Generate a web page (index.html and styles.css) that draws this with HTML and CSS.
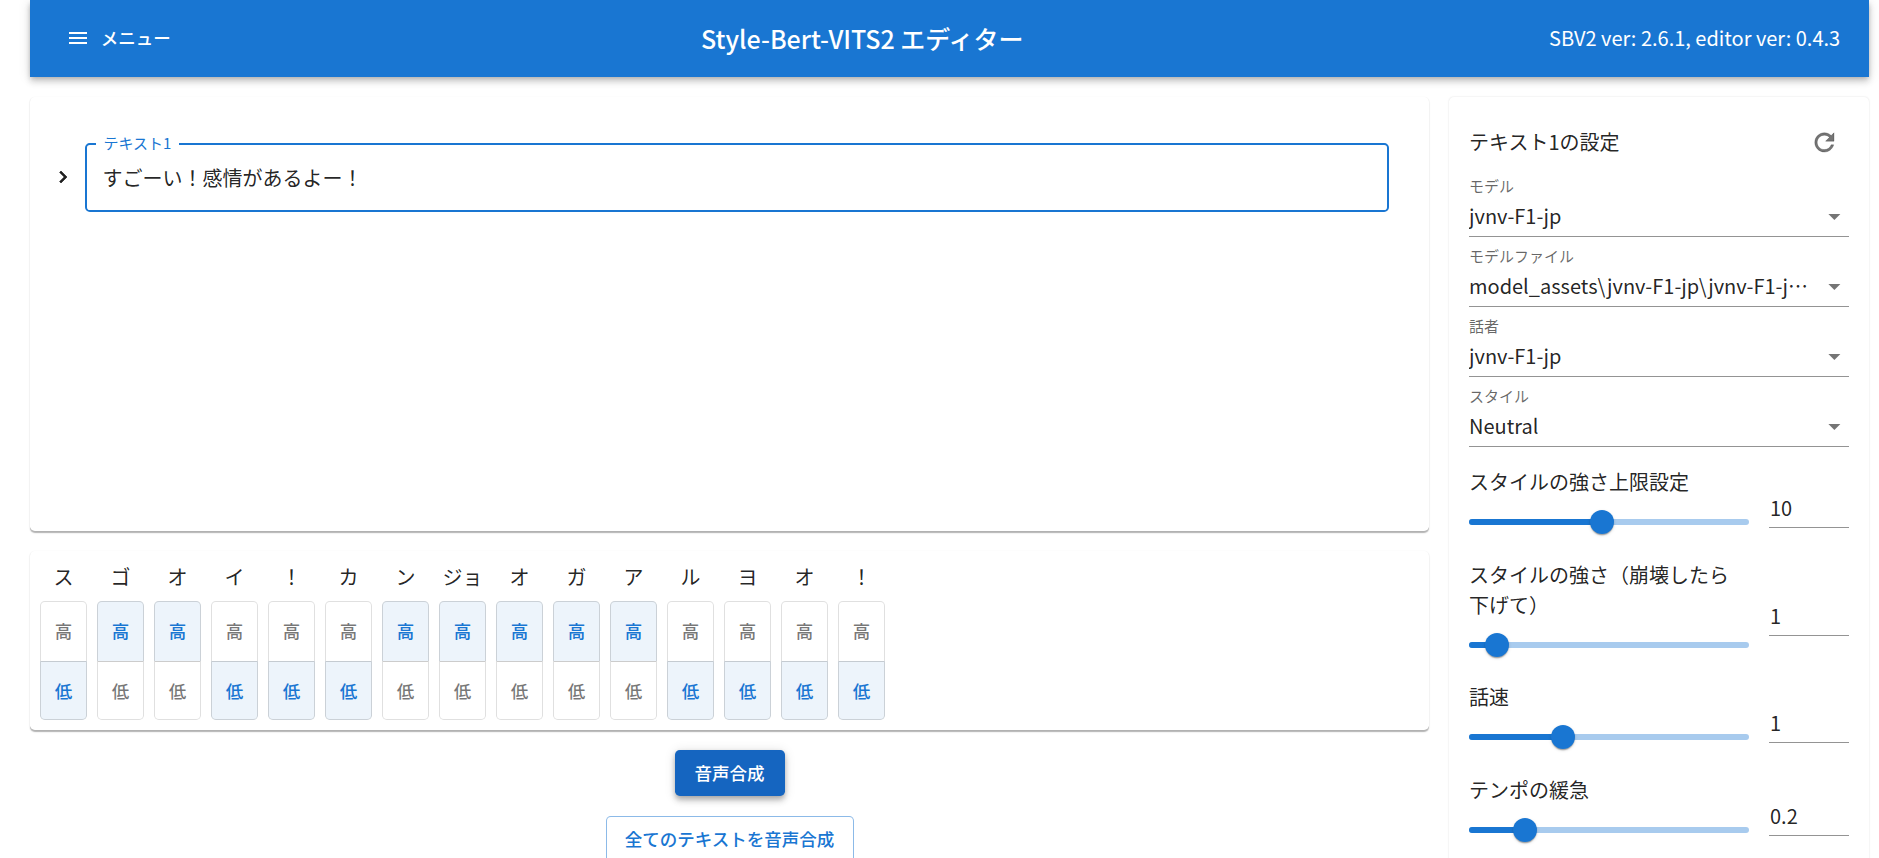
FILE: index.html
```html
<!DOCTYPE html>
<html lang="ja">
<head>
<meta charset="utf-8">
<title>Style-Bert-VITS2 エディター</title>
<link rel="stylesheet" href="styles.css">
</head>
<body>
<div class="page">
  <header class="appbar">
    <button class="menu-btn"><svg class="menu-icon" viewBox="0 0 24 24"><path d="M3 18h18v-2H3v2zm0-5h18v-2H3v2zm0-7v2h18V6H3z"/></svg><span>メニュー</span></button>
    <div class="app-title">Style-Bert-VITS2 エディター</div>
    <div class="app-version">SBV2 ver: 2.6.1, editor ver: 0.4.3</div>
  </header>
  <main class="main">
    <section class="left">
      <div class="paper editor">
        <svg class="chevron" viewBox="0 0 24 24"><path d="M8.59 16.59 13.17 12 8.59 7.41 10 6l6 6-6 6-1.41-1.41z"/></svg>
        <div class="textfield">
          <span class="textfield-label">テキスト1</span>
          <span>すごーい！感情があるよー！</span>
        </div>
      </div>
      <div class="paper accent-panel">
        <div class="mora"><div class="kana">ス</div><div class="toggle"><div class="tg">高</div><div class="tg on">低</div></div></div>
        <div class="mora"><div class="kana">ゴ</div><div class="toggle"><div class="tg on">高</div><div class="tg">低</div></div></div>
        <div class="mora"><div class="kana">オ</div><div class="toggle"><div class="tg on">高</div><div class="tg">低</div></div></div>
        <div class="mora"><div class="kana">イ</div><div class="toggle"><div class="tg">高</div><div class="tg on">低</div></div></div>
        <div class="mora"><div class="kana">！</div><div class="toggle"><div class="tg">高</div><div class="tg on">低</div></div></div>
        <div class="mora"><div class="kana">カ</div><div class="toggle"><div class="tg">高</div><div class="tg on">低</div></div></div>
        <div class="mora"><div class="kana">ン</div><div class="toggle"><div class="tg on">高</div><div class="tg">低</div></div></div>
        <div class="mora"><div class="kana">ジョ</div><div class="toggle"><div class="tg on">高</div><div class="tg">低</div></div></div>
        <div class="mora"><div class="kana">オ</div><div class="toggle"><div class="tg on">高</div><div class="tg">低</div></div></div>
        <div class="mora"><div class="kana">ガ</div><div class="toggle"><div class="tg on">高</div><div class="tg">低</div></div></div>
        <div class="mora"><div class="kana">ア</div><div class="toggle"><div class="tg on">高</div><div class="tg">低</div></div></div>
        <div class="mora"><div class="kana">ル</div><div class="toggle"><div class="tg">高</div><div class="tg on">低</div></div></div>
        <div class="mora"><div class="kana">ヨ</div><div class="toggle"><div class="tg">高</div><div class="tg on">低</div></div></div>
        <div class="mora"><div class="kana">オ</div><div class="toggle"><div class="tg">高</div><div class="tg on">低</div></div></div>
        <div class="mora"><div class="kana">！</div><div class="toggle"><div class="tg">高</div><div class="tg on">低</div></div></div>
      </div>
      <div class="actions">
        <button class="btn btn-primary">音声合成</button>
        <button class="btn btn-outline">全てのテキストを音声合成</button>
      </div>
    </section>
    <aside class="paper settings">
      <div class="settings-head">
        <span>テキスト1の設定</span>
        <svg class="reload" viewBox="0 0 24 24"><path d="M17.65 6.35C16.2 4.9 14.21 4 12 4c-4.42 0-7.99 3.58-7.99 8s3.57 8 7.99 8c3.73 0 6.84-2.55 7.73-6h-2.08c-.82 2.33-3.04 4-5.65 4-3.31 0-6-2.69-6-6s2.69-6 6-6c1.66 0 3.14.69 4.22 1.78L13 11h7V4l-2.35 2.35z"/></svg>
      </div>
      <div class="select">
        <div class="select-label">モデル</div>
        <div class="select-value"><span class="select-text">jvnv-F1-jp</span><svg class="caret" viewBox="0 0 24 24"><path d="M7 10l5 5 5-5z"/></svg></div>
      </div>
      <div class="select">
        <div class="select-label">モデルファイル</div>
        <div class="select-value"><span class="select-text">model_assets\jvnv-F1-jp\jvnv-F1-jp_e160_s14000.safetensors</span><svg class="caret" viewBox="0 0 24 24"><path d="M7 10l5 5 5-5z"/></svg></div>
      </div>
      <div class="select">
        <div class="select-label">話者</div>
        <div class="select-value"><span class="select-text">jvnv-F1-jp</span><svg class="caret" viewBox="0 0 24 24"><path d="M7 10l5 5 5-5z"/></svg></div>
      </div>
      <div class="select">
        <div class="select-label">スタイル</div>
        <div class="select-value"><span class="select-text">Neutral</span><svg class="caret" viewBox="0 0 24 24"><path d="M7 10l5 5 5-5z"/></svg></div>
      </div>
      <div class="sliders">
        <div class="slider-row">
          <div>
            <div class="slider-label">スタイルの強さ上限設定</div>
            <div class="slider"><div class="rail"><div class="fill" style="width:47.5%"></div><div class="thumb" style="left:47.5%"></div></div></div>
          </div>
          <div class="num">10</div>
        </div>
        <div class="slider-row">
          <div>
            <div class="slider-label">スタイルの強さ（崩壊したら<br>下げて）</div>
            <div class="slider"><div class="rail"><div class="fill" style="width:10%"></div><div class="thumb" style="left:10%"></div></div></div>
          </div>
          <div class="num">1</div>
        </div>
        <div class="slider-row">
          <div>
            <div class="slider-label">話速</div>
            <div class="slider"><div class="rail"><div class="fill" style="width:33.5%"></div><div class="thumb" style="left:33.5%"></div></div></div>
          </div>
          <div class="num">1</div>
        </div>
        <div class="slider-row">
          <div>
            <div class="slider-label">テンポの緩急</div>
            <div class="slider"><div class="rail"><div class="fill" style="width:20%"></div><div class="thumb" style="left:20%"></div></div></div>
          </div>
          <div class="num">0.2</div>
        </div>
      </div>
    </aside>
  </main>
</div>
</body>
</html>
```

FILE: styles.css
```css
* { box-sizing: border-box; }
html, body { margin: 0; height: 100%; overflow: hidden; background: #fff; }
body {
  font-family: "Noto Sans CJK JP", "Noto Sans", sans-serif;
  font-size: 20px;
  line-height: 30px;
  color: rgba(0, 0, 0, 0.87);
}
button { font-family: inherit; cursor: pointer; }
.page { margin: 0 10px 0 30px; }

.appbar {
  height: 77px;
  background: #1976d2;
  color: #fff;
  padding: 0 28.8px;
  display: flex;
  align-items: center;
  justify-content: space-between;
  box-shadow: 0 2.4px 4.8px -1.2px rgba(0,0,0,.2), 0 4.8px 6px 0 rgba(0,0,0,.14), 0 1.2px 12px 0 rgba(0,0,0,.12);
  position: relative;
  z-index: 2;
}
.menu-btn {
  display: flex;
  align-items: center;
  gap: 11px;
  background: none;
  border: 0;
  color: #fff;
  font-size: 17.5px;
  font-weight: 500;
  line-height: 29.4px;
  padding: 7.2px 4.8px 7.2px 7px;
  margin-top: -2px;
}
.menu-icon { width: 24px; height: 24px; fill: #fff; display: block; }
.app-title { font-size: 25px; line-height: 36px; font-weight: 500; margin-top: -2px; }
.app-version { margin-top: -2px; }

.main { display: flex; gap: 20px; padding-top: 20px; align-items: flex-start; }
.left { flex: 1; min-width: 0; display: flex; flex-direction: column; gap: 20px; }
.paper {
  background: #fff;
  border-radius: 4.8px;
  box-shadow: 0 1.2px 1.2px 0 rgba(0,0,0,.3), 0 0 1.5px 0 rgba(0,0,0,.03);
}

.editor {
  height: 434px;
  padding: 46px 40px 0 20px;
  display: flex;
  align-items: flex-start;
}
.chevron { width: 24px; height: 24px; fill: rgba(0,0,0,.87); stroke: rgba(0,0,0,.87); stroke-width: .6px; flex: none; margin: 22px 10px 0 1px; display: block; }
.textfield {
  position: relative;
  flex: 1;
  height: 69px;
  border: 2.4px solid #1976d2;
  border-radius: 4.8px;
  padding: 0 15.5px;
  display: flex;
  align-items: center;
}
.textfield-label {
  position: absolute;
  left: 8.5px;
  top: -13px;
  padding: 0 8px;
  background: #fff;
  color: #1976d2;
  font-size: 15px;
  line-height: 22px;
}

.accent-panel { height: 179px; padding: 11px 10px 10px; display: flex; gap: 10px; }
.mora { width: 47px; display: flex; flex-direction: column; gap: 9px; }
.kana { text-align: center; white-space: nowrap; }
.toggle { display: flex; flex-direction: column; height: 119px; }
.tg {
  display: flex;
  align-items: center;
  justify-content: center;
  font-size: 17.5px;
  font-weight: 500;
  color: rgba(0,0,0,.54);
  border: 1.2px solid rgba(0,0,0,.12);
}
.tg:first-child { height: 60px; padding-bottom: 2px; border-radius: 4.8px 4.8px 0 0; border-bottom: 0; }
.tg:last-child { height: 59px; border-radius: 0 0 4.8px 4.8px; border-top: 1.2px solid rgba(0,0,0,.2); }
.tg.on { color: #1976d2; background: rgba(25,118,210,.08); border-color: rgba(0,0,0,.14); }
.tg.on:last-child { border-top-color: rgba(0,0,0,.17); }

.actions { display: flex; flex-direction: column; align-items: center; gap: 20px; }
.btn { font-size: 17.5px; font-weight: 500; border-radius: 4.8px; line-height: 29.4px; white-space: nowrap; }
.btn-primary {
  width: 110px;
  height: 46px;
  padding: 0;
  border: 0;
  color: #fff;
  background: #1565c0;
  box-shadow: 0 2.4px 4.8px -1.2px rgba(0,0,0,.2), 0 4.8px 6px 0 rgba(0,0,0,.14), 0 1.2px 12px 0 rgba(0,0,0,.12);
}
.btn-outline {
  width: 248px;
  height: 46px;
  padding: 0;
  color: #1976d2;
  background: #fff;
  border: 1.2px solid rgba(25,118,210,.5);
}

.settings { flex: none; width: 420px; height: 800px; padding: 30px 20px 0; box-shadow: 0 0 2px 0 rgba(0,0,0,.14); }
.settings-head { display: flex; align-items: center; justify-content: space-between; height: 30px; margin-bottom: 9.6px; }
.reload { width: 28.8px; height: 28.8px; fill: rgba(0,0,0,.54); stroke: rgba(0,0,0,.54); stroke-width: .35px; margin-right: 10.6px; display: block; }
.select { height: 70px; padding-top: 8px; }
.select-label { font-size: 15px; line-height: 22.5px; color: rgba(0,0,0,.6); }
.select-value {
  height: 39.5px;
  border-bottom: 1.2px solid rgba(0,0,0,.42);
  display: flex;
  align-items: center;
  justify-content: space-between;
}
.select-text { flex: 1; min-width: 0; overflow: hidden; text-overflow: ellipsis; white-space: nowrap; padding-right: 8px; }
.caret { width: 28.8px; height: 28.8px; fill: rgba(0,0,0,.54); flex: none; margin-right: 0.6px; display: block; }

.sliders { padding-top: 20.5px; display: flex; flex-direction: column; gap: 12.5px; }
.slider-row { display: grid; grid-template-columns: 280px 80px; column-gap: 20px; align-items: center; }
.slider { height: 50px; display: flex; align-items: center; }
.rail { position: relative; width: 100%; height: 6px; border-radius: 6px; background: rgba(25,118,210,.38); }
.fill { height: 100%; border-radius: 6px; background: #1976d2; }
.thumb {
  position: absolute;
  top: 50%;
  width: 24px;
  height: 24px;
  margin: -12px 0 0 -12px;
  border-radius: 50%;
  background: #1976d2;
  box-shadow: 0 2.4px 1.2px -1.2px rgba(0,0,0,.2), 0 1.2px 1.2px 0 rgba(0,0,0,.14), 0 1.2px 3.6px 0 rgba(0,0,0,.12);
}
.num { height: 38px; margin-top: 4px; line-height: 36px; border-bottom: 1.2px solid rgba(0,0,0,.42); padding-left: 1px; }
```
